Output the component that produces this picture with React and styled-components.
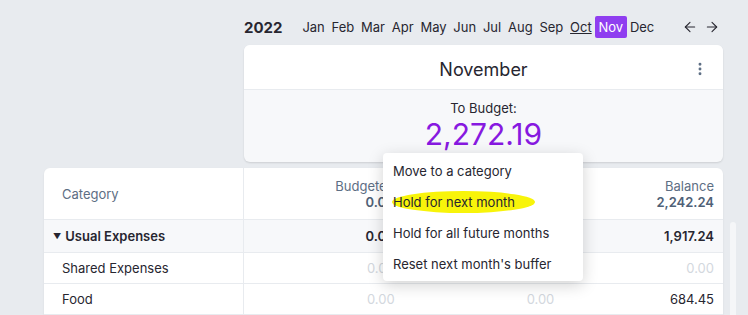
import React from 'react'
import styled, { createGlobalStyle } from 'styled-components'
import { ArrowLeft, ArrowRight, MoreVertical } from 'lucide-react'

const GlobalStyle = createGlobalStyle`
  body {
    margin: 0;
    background: #e8ebef;
    font-family: Inter, "Noto Sans", sans-serif;
    color: #272630;
  }
`

const MONTHS = ['Jan', 'Feb', 'Mar', 'Apr', 'May', 'Jun', 'Jul', 'Aug', 'Sep', 'Oct', 'Nov', 'Dec']

const ROWS = [
    { name: 'Shared Expenses', budgeted: '0.00', spent: '0.00', balance: '0.00', zero: true },
    { name: 'Food', budgeted: '0.00', spent: '0.00', balance: '684.45' },
]

const MENU = ['Move to a category', 'Hold for next month', 'Hold for all future months', "Reset next month's buffer"]

function App() {
    return (
        <Page>
            <GlobalStyle />
            <Main>
                <Top>
                    <MonthBar>
                        <Year>2022</Year>
                        <Months>
                            {MONTHS.map(m => (
                                <Month key={m} $active={m === 'Nov'} $current={m === 'Oct'}>{m}</Month>
                            ))}
                        </Months>
                        <Arrows>
                            <ArrowLeft size={16} strokeWidth={1.6} />
                            <ArrowRight size={16} strokeWidth={1.6} />
                        </Arrows>
                    </MonthBar>
                    <BudgetCard>
                        <CardHeader>
                            November
                            <Dots><MoreVertical size={16} strokeWidth={2.4} /></Dots>
                        </CardHeader>
                        <CardBody>
                            <ToBudgetLabel>To Budget:</ToBudgetLabel>
                            <ToBudgetValue>2,272.19</ToBudgetValue>
                        </CardBody>
                        <Menu>
                            {MENU.map(item => (
                                <MenuItem key={item}>
                                    {item === 'Hold for next month' ? <Highlight>{item}</Highlight> : item}
                                </MenuItem>
                            ))}
                        </Menu>
                    </BudgetCard>
                </Top>
                <Table>
                    <HeadRow>
                        <NameCell><HeadLabel>Category</HeadLabel></NameCell>
                        <HeadCell><HeadLabel>Budgeted</HeadLabel><HeadValue>0.00</HeadValue></HeadCell>
                        <HeadCell><HeadLabel>Spent</HeadLabel><HeadValue>0.00</HeadValue></HeadCell>
                        <HeadCell><HeadLabel>Balance</HeadLabel><HeadValue>2,242.24</HeadValue></HeadCell>
                    </HeadRow>
                    <Row $group>
                        <NameCell $bold><Caret>▼</Caret>Usual Expenses</NameCell>
                        <ValueCell $bold>0.00</ValueCell>
                        <ValueCell $bold>0.00</ValueCell>
                        <ValueCell $bold>1,917.24</ValueCell>
                    </Row>
                    {ROWS.map(r => (
                        <Row key={r.name}>
                            <NameCell>{r.name}</NameCell>
                            <ValueCell $faint>{r.budgeted}</ValueCell>
                            <ValueCell $faint>{r.spent}</ValueCell>
                            <ValueCell $faint={r.zero}>{r.balance}</ValueCell>
                        </Row>
                    ))}
                </Table>
            </Main>
            <ScrollTrack />
        </Page>
    )
}

export default App

const Page = styled.div`
    display: flex;
    align-items: flex-start;
    height: 315px;
    overflow: hidden;
    padding-left: 44px;
`

const Main = styled.div`
    width: 679px;
    display: flex;
    flex-direction: column;
`

const Top = styled.div`
    margin-left: 200px;
    display: flex;
    flex-direction: column;
`

const MonthBar = styled.div`
    display: flex;
    align-items: center;
    height: 22px;
    margin-top: 16px;
`

const Year = styled.div`
    font-size: 15px;
    font-weight: 700;
    width: 55px;
    color: #272630;
`

const Months = styled.div`
    display: flex;
    flex: 1;
`

const Month = styled.div`
    font-size: 13px;
    padding: 0 3.4px;
    height: 22px;
    line-height: 22px;
    border-radius: 2px;
    color: ${p => (p.$active ? '#fff' : '#272630')};
    background: ${p => (p.$active ? '#8f3ef0' : 'transparent')};
    text-decoration: ${p => (p.$current ? 'underline' : 'none')};
`

const Arrows = styled.div`
    display: flex;
    gap: 6px;
    margin-right: 3px;
    color: #272630;
`

const BudgetCard = styled.div`
    position: relative;
    margin-top: 7px;
    background: #f7f8fa;
    border-radius: 6px;
    box-shadow: 0 1px 2px rgba(0, 0, 0, 0.12);
    display: flex;
    flex-direction: column;
`

const CardHeader = styled.div`
    position: relative;
    height: 45px;
    padding-top: 4px;
    box-sizing: border-box;
    display: flex;
    align-items: center;
    justify-content: center;
    font-size: 18px;
    background: #fff;
    border-bottom: 1px solid #e8ebef;
    border-radius: 6px 6px 0 0;
`

const Dots = styled.div`
    position: absolute;
    right: 15px;
    top: 15px;
    color: #5d6e84;
`

const CardBody = styled.div`
    height: 72px;
    display: flex;
    flex-direction: column;
    align-items: center;
    padding-top: 10px;
    box-sizing: border-box;
`

const ToBudgetLabel = styled.div`
    font-size: 13px;
    line-height: 16px;
`

const ToBudgetValue = styled.div`
    font-size: 30px;
    line-height: 37px;
    color: #8719e0;
`

const Menu = styled.div`
    position: absolute;
    left: 139px;
    top: 108px;
    width: 200px;
    padding: 2px 0;
    background: #fff;
    border-radius: 4px;
    box-shadow: 0 4px 16px rgba(0, 0, 0, 0.18);
    z-index: 10;
`

const MenuItem = styled.div`
    height: 31px;
    display: flex;
    align-items: center;
    padding: 0 10px;
    font-size: 13px;
    color: #272630;
`

const Highlight = styled.span`
    background: #f8f40a;
    border-radius: 50%;
    padding: 3px 20px 3px 1px;
    margin-left: -1px;
`

const Table = styled.div`
    margin-top: 6px;
    background: #fff;
    border-radius: 6px 6px 0 0;
    box-shadow: 0 1px 2px rgba(0, 0, 0, 0.08);
`

const HeadRow = styled.div`
    display: grid;
    grid-template-columns: 200px 1fr 1fr 1fr;
    height: 51px;
    border-bottom: 1px solid #e8ebef;
`

const Row = styled.div`
    display: grid;
    grid-template-columns: 200px 1fr 1fr 1fr;
    height: ${p => (p.$group ? '32px' : '30px')};
    background: ${p => (p.$group ? '#f7f8fa' : '#fff')};
    border-bottom: 1px solid #e8ebef;
`

const NameCell = styled.div`
    display: flex;
    align-items: center;
    padding-left: 18px;
    border-right: 1px solid #e8ebef;
    font-size: 13px;
    font-weight: ${p => (p.$bold ? 600 : 400)};
`

const Caret = styled.span`
    font-size: 8px;
    margin-left: -9px;
    margin-right: 4px;
`

const HeadCell = styled.div`
    display: flex;
    flex-direction: column;
    align-items: flex-end;
    justify-content: center;
    padding-right: 9px;
`

const HeadLabel = styled.div`
    font-size: 13px;
    color: #5d6e84;
    line-height: 16px;
`

const HeadValue = styled.div`
    font-size: 13px;
    font-weight: 600;
    color: #4f6177;
    line-height: 16px;
`

const ValueCell = styled.div`
    display: flex;
    align-items: center;
    justify-content: flex-end;
    padding-right: 9px;
    font-size: 13px;
    font-weight: ${p => (p.$bold ? 600 : 400)};
    color: ${p => (p.$faint ? '#d3d8de' : '#272630')};
`

const ScrollTrack = styled.div`
    width: 6px;
    height: 100px;
    margin-left: 7px;
    margin-top: 222px;
    background: #f5f6f8;
    border-radius: 3px 3px 0 0;
`
